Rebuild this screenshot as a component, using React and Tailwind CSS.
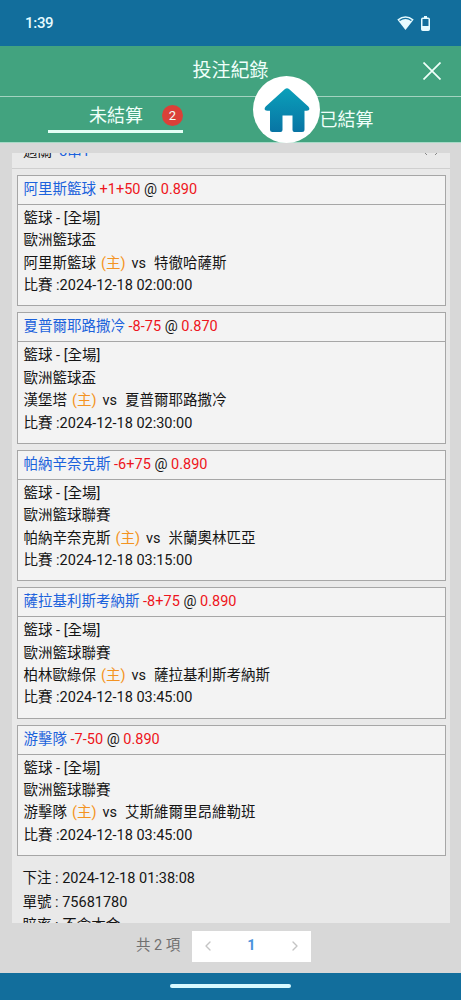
import { ChevronLeft, ChevronRight } from 'lucide-react';

const bets = [
  { pick: '阿里斯籃球', line: '+1+50', odds: '0.890', league: '歐洲籃球盃', home: '阿里斯籃球', away: '特徹哈薩斯', time: '2024-12-18 02:00:00' },
  { pick: '夏普爾耶路撒冷', line: '-8-75', odds: '0.870', league: '歐洲籃球盃', home: '漢堡塔', away: '夏普爾耶路撒冷', time: '2024-12-18 02:30:00' },
  { pick: '帕納辛奈克斯', line: '-6+75', odds: '0.890', league: '歐洲籃球聯賽', home: '帕納辛奈克斯', away: '米蘭奧林匹亞', time: '2024-12-18 03:15:00' },
  { pick: '薩拉基利斯考納斯', line: '-8+75', odds: '0.890', league: '歐洲籃球聯賽', home: '柏林歐綠保', away: '薩拉基利斯考納斯', time: '2024-12-18 03:45:00' },
  { pick: '游擊隊', line: '-7-50', odds: '0.890', league: '歐洲籃球聯賽', home: '游擊隊', away: '艾斯維爾里昂維勒班', time: '2024-12-18 03:45:00' },
];

const StatusBar = () => (
  <div className="h-[46px] shrink-0 bg-[#126e9c] flex items-center justify-between pl-[25px] pr-[31px] text-[#e6fbff]">
    <span className="text-[15px] font-medium tracking-[-0.3px]">1:39</span>
    <div className="flex items-center gap-[7px]">
      <svg width="17" height="14" viewBox="0 0 17 14">
        <path d="M8.5 14 L0.3 3.6 Q8.5 -3.2 16.7 3.6 Z" fill="#e6fbff" />
        <path d="M2.6 4.6 Q8.5 0.2 14.4 4.6" fill="none" stroke="#126e9c" strokeWidth="1.3" />
      </svg>
      <svg width="9" height="15" viewBox="0 0 9 15">
        <path d="M3 0h3v2H3z" fill="#e6fbff" />
        <rect x="0.75" y="2.25" width="7.5" height="12" rx="1" fill="none" stroke="#e6fbff" strokeWidth="1.5" />
        <path d="M1 10h7v4H1z" fill="#e6fbff" />
      </svg>
    </div>
  </div>
);

const Header = () => (
  <div className="relative h-[97px] shrink-0 bg-[#42a37f] border-b border-[#a8dac7] text-[#f0fffa]">
    <div className="h-[51px] border-b border-[#a3d3c0] grid grid-cols-[1fr_auto_1fr] items-center pr-[20px]">
      <h1 className="col-start-2 text-[19px] leading-[50px] translate-x-[10px]">投注紀錄</h1>
      <button className="justify-self-end">
        <svg width="18" height="18" viewBox="0 0 18 18" stroke="#f0fffa" strokeWidth="1.7">
          <path d="M0.5 0.5 L17.5 17.5 M17.5 0.5 L0.5 17.5" />
        </svg>
      </button>
    </div>
    <div className="flex h-[45px]">
      <div className="w-1/2 pl-[48px]">
        <div className="w-[135px] h-[36px] border-b-3 border-[#e4fff5] flex items-center justify-end">
          <span className="text-[18px] leading-[33px] pt-[4px]">未結算</span>
          <span className="ml-[19px] mt-[4px] size-[21px] rounded-full bg-[#db4038] text-[13px] leading-[21px] text-center">2</span>
        </div>
      </div>
      <div className="w-1/2 pl-[89px] pt-[7px] text-[18px] leading-[32px]">已結算</div>
    </div>
    {/* floating home button */}
    <button className="absolute left-[253px] top-[30px] size-[67px] rounded-full bg-white flex justify-center pt-[12px]">
      <svg width="46" height="44" viewBox="0 0 46 44">
        <defs>
          <linearGradient id="home" x1="0" y1="0" x2="0" y2="1">
            <stop offset="0" stopColor="#0ba0ba" />
            <stop offset="1" stopColor="#0874a4" />
          </linearGradient>
        </defs>
        <path
          d="M21 1 Q23 -0.6 25 1 L44.3 18.5 Q46 20.5 45 22 Q44 23 42 22.8 L40.5 22.8 V41.5 Q40.5 44 38 44 H30.5 Q28.5 44 28.5 42 V27.5 H18.5 V42 Q18.5 44 16.5 44 H8.5 Q6 44 6 41.5 V22.8 H4 Q2 23 1 22 Q0 20.5 1.7 18.5 Z"
          fill="url(#home)"
        />
      </svg>
    </button>
  </div>
);

const BetCard = ({ bet }) => (
  <div className="h-[131.4px] shrink-0 bg-[#f3f3f3] border border-[#a6a6a6]">
    <div className="h-[29px] border-b border-[#a6a6a6] px-[5.5px] leading-[27px] whitespace-pre">
      <span className="text-[#1b62dc]">{bet.pick}</span>{' '}
      <span className="text-[#ee1520]">{bet.line}</span>
      {' @ '}
      <span className="text-[#ee1520]">{bet.odds}</span>
    </div>
    <div className="px-[5.5px] pt-[3px] leading-[22.4px] whitespace-pre">
      <p>籃球 - [全場]</p>
      <p>{bet.league}</p>
      <p className="flex">
        <span>{bet.home}</span>
        <span className="text-[#f39322] ml-[5px]">(主)</span>
        <span className="ml-[6px]">vs</span>
        <span className="ml-[8px]">{bet.away}</span>
      </p>
      <p>比賽 :{bet.time}</p>
    </div>
  </div>
);

const Pagination = () => (
  <div className="h-[50px] shrink-0 flex items-center pl-[136px] pb-[4px] text-[14.5px] text-[#707070]">
    <span className="w-[56px]">共 2 項</span>
    <div className="w-[119px] h-[31px] bg-white flex items-center justify-between px-[8px]">
      <ChevronLeft size={16} color="#c4c4c4" />
      <span className="text-[#4a93dc] font-bold">1</span>
      <ChevronRight size={16} color="#c4c4c4" />
    </div>
  </div>
);

const App = () => {
  return (
    <div className="w-[461px] h-[1000px] overflow-hidden flex flex-col bg-[#d8d8d8] text-[14.5px] text-[#151515] font-[Roboto,'Noto_Sans_CJK_TC',sans-serif]">
      <StatusBar />
      <Header />
      <div className="mt-[10px] ml-[12px] mr-[11px] h-[770px] shrink-0 overflow-hidden bg-[#e9e9e9] flex flex-col">
        <div className="h-[16px] shrink-0 overflow-hidden border-b border-[#cfcfcf] flex items-end justify-between pl-[11px] pr-[11px]">
          <p className="leading-[22px] pb-[5px] whitespace-pre">過關  <span className="text-[#1b62dc]">3串1</span></p>
          <svg className="mb-[12px]" width="16" height="10" viewBox="0 0 16 10" stroke="#888" fill="none">
            <path d="M2 7 L4 9 M12 9 L14 7" />
          </svg>
        </div>
        <div className="flex flex-col gap-[6px] pl-[5px] pr-[4px] pt-[6px]">
          {bets.map((bet) => (
            <BetCard key={bet.pick} bet={bet} />
          ))}
        </div>
        <div className="pl-[10.5px] pt-[11px] leading-[23.6px]">
          <p>下注 : 2024-12-18 01:38:08</p>
          <p>單號 : 75681780</p>
          <p>賠率 : 不含本金</p>
        </div>
      </div>
      <Pagination />
      <div className="h-[27px] shrink-0 bg-[#126e9c] flex justify-center pt-[11px]">
        <div className="w-[121px] h-[4px] rounded-full bg-[#d8faff]" />
      </div>
    </div>
  );
};

export default App;
